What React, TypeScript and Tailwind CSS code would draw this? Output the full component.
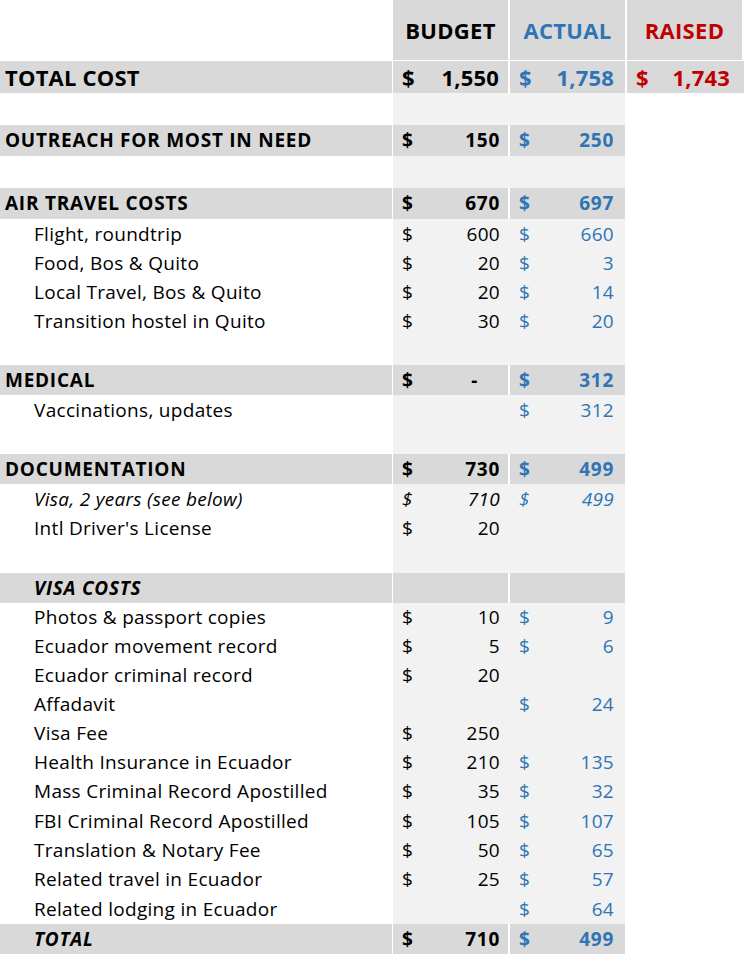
import React from 'react';

type Kind = 'gray' | 'item' | 'blank';

interface Row {
    kind: Kind;
    label?: string;
    budget?: string;
    actual?: string;
    italic?: boolean;
    labelItalic?: boolean;
    h: number;
}

const BLUE = 'text-[#2f74b5]';

const rows: Row[] = [
    { kind: 'blank', h: 32 },
    { kind: 'gray', label: 'OUTREACH FOR MOST IN NEED', budget: '150', actual: '250', h: 31 },
    { kind: 'blank', h: 32 },
    { kind: 'gray', label: 'AIR TRAVEL COSTS', budget: '670', actual: '697', h: 31 },
    { kind: 'item', label: 'Flight, roundtrip', budget: '600', actual: '660', h: 30 },
    { kind: 'item', label: 'Food, Bos & Quito', budget: '20', actual: '3', h: 29 },
    { kind: 'item', label: 'Local Travel, Bos & Quito', budget: '20', actual: '14', h: 29 },
    { kind: 'item', label: 'Transition hostel in Quito', budget: '30', actual: '20', h: 29 },
    { kind: 'blank', h: 29 },
    { kind: 'gray', label: 'MEDICAL', budget: '-', actual: '312', h: 30 },
    { kind: 'item', label: 'Vaccinations, updates', actual: '312', h: 30 },
    { kind: 'blank', h: 29 },
    { kind: 'gray', label: 'DOCUMENTATION', budget: '730', actual: '499', h: 30 },
    { kind: 'item', label: 'Visa, 2 years (see below)', budget: '710', actual: '499', italic: true, h: 30 },
    { kind: 'item', label: "Intl Driver's License", budget: '20', h: 29 },
    { kind: 'blank', h: 30 },
    { kind: 'gray', label: 'VISA COSTS', labelItalic: true, h: 30 },
    { kind: 'item', label: 'Photos & passport copies', budget: '10', actual: '9', h: 29 },
    { kind: 'item', label: 'Ecuador movement record', budget: '5', actual: '6', h: 29 },
    { kind: 'item', label: 'Ecuador criminal record', budget: '20', h: 29 },
    { kind: 'item', label: 'Affadavit', actual: '24', h: 29 },
    { kind: 'item', label: 'Visa Fee', budget: '250', h: 29 },
    { kind: 'item', label: 'Health Insurance in Ecuador', budget: '210', actual: '135', h: 29 },
    { kind: 'item', label: 'Mass Criminal Record Apostilled', budget: '35', actual: '32', h: 29 },
    { kind: 'item', label: 'FBI Criminal Record Apostilled', budget: '105', actual: '107', h: 30 },
    { kind: 'item', label: 'Translation & Notary Fee', budget: '50', actual: '65', h: 29 },
    { kind: 'item', label: 'Related travel in Ecuador', budget: '25', actual: '57', h: 29 },
    { kind: 'item', label: 'Related lodging in Ecuador', actual: '64', h: 30 },
    { kind: 'gray', label: 'TOTAL', labelItalic: true, budget: '710', actual: '499', h: 30 },
];

const Money = ({ value, color, pr }: { value?: string; color: string; pr: string }) => {
    if (!value) return null;
    const isDash = value === '-';
    return (
        <div className={`flex w-full justify-between items-center pl-[9px] ${pr} ${color}`}>
            <span>$</span>
            <span className={isDash ? 'pr-[22px]' : ''}>{value}</span>
        </div>
    );
};

export default function App() {
    return (
        <div className="w-[744px] h-[955px] bg-white text-black font-['Open_Sans','Lato',sans-serif]">
            {/* header */}
            <div className="flex h-[61px] border-b border-white text-[22px] font-bold tracking-[0.3px]">
                <div className="w-[392px] bg-white" />
                <div className="w-[116px] border-l border-white bg-[#d9d9d9] flex items-center justify-center pt-[1px]">BUDGET</div>
                <div className="w-[117px] border-l-2 border-white bg-[#d9d9d9] flex items-center justify-center pt-[1px] text-[#2f74b5]">ACTUAL</div>
                <div className="w-[117px] border-l-2 border-white bg-[#d9d9d9] flex items-center justify-center pt-[1px] text-[#c00000]">RAISED</div>
            </div>

            {/* total cost */}
            <div className="flex h-[32px] text-[22px] font-bold tracking-[0.2px] bg-[#d9d9d9]">
                <div className="w-[392px] flex items-center pl-[5px]">TOTAL COST</div>
                <div className="w-[116px] border-l border-white flex items-center">
                    <Money value="1,550" color="text-black" pr="pr-[9px]" />
                </div>
                <div className="w-[117px] border-l-2 border-white flex items-center">
                    <Money value="1,758" color={BLUE} pr="pr-[11px]" />
                </div>
                <div className="w-[117px] border-l-2 border-white flex items-center">
                    <Money value="1,743" color="text-[#c00000]" pr="pr-[12px]" />
                </div>
            </div>

            {rows.map((r, i) => {
                const gray = r.kind === 'gray';
                const labelBg = gray ? 'bg-[#d9d9d9]' : 'bg-white';
                const cellBg = gray ? 'bg-[#d9d9d9]' : 'bg-[#f2f2f2]';
                const sep = gray ? 'border-white' : 'border-[#f2f2f2]';
                const text = gray ? 'text-[19px] font-bold tracking-[0.75px]' : 'text-[19px] tracking-[0.3px]';
                return (
                    <div key={i} className={`flex ${text}`} style={{ height: r.h }}>
                        <div
                            className={`w-[392px] flex items-center ${labelBg} ${gray && !r.labelItalic ? 'pl-[5px]' : 'pl-[34px]'} ${r.italic || r.labelItalic ? 'italic' : ''}`}
                        >
                            {r.label}
                        </div>
                        <div className={`w-[116px] border-l border-white flex items-center ${cellBg} ${r.italic ? 'italic' : ''}`}>
                            <Money value={r.budget} color="text-black" pr="pr-[8px]" />
                        </div>
                        <div className={`w-[117px] border-l-2 ${sep} flex items-center ${cellBg} ${r.italic ? 'italic' : ''}`}>
                            <Money value={r.actual} color={BLUE} pr="pr-[11px]" />
                        </div>
                        <div className="w-[119px] bg-white" />
                    </div>
                );
            })}
        </div>
    );
}
